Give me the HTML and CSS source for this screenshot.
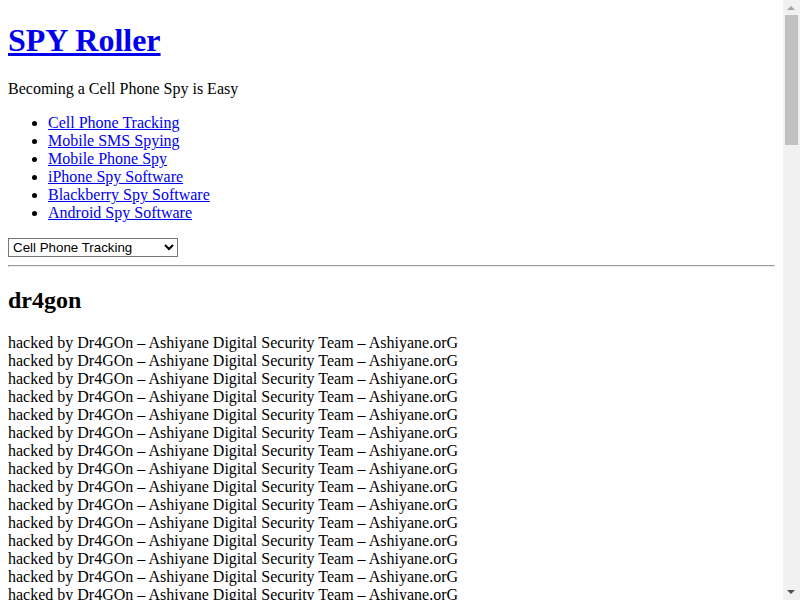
FILE: index.html
```html
<!DOCTYPE html>
<html>
<head>
<meta charset="utf-8">
<title>SPY Roller</title>
<link rel="stylesheet" href="styles.css">
</head>
<body>
<div class="header">
<h1 class="site-title"><a href="#">SPY Roller</a></h1>
<p class="tagline">Becoming a Cell Phone Spy is Easy</p>
<ul class="nav">
<li><a href="#">Cell Phone Tracking</a></li>
<li><a href="#">Mobile SMS Spying</a></li>
<li><a href="#">Mobile Phone Spy</a></li>
<li><a href="#">iPhone Spy Software</a></li>
<li><a href="#">Blackberry Spy Software</a></li>
<li><a href="#">Android Spy Software</a></li>
</ul>
<select class="nav-select">
<option>Cell Phone Tracking</option>
<option>Mobile SMS Spying</option>
<option>Mobile Phone Spy</option>
<option>iPhone Spy Software</option>
<option>Blackberry Spy Software</option>
<option>Android Spy Software</option>
</select>
</div>
<hr class="divider">
<div class="post">
<h2 class="post-title">dr4gon</h2>
<div class="post-body" id="body"></div>
</div>
<div class="fake-scrollbar">
<span class="sb-arrow sb-up"></span>
<span class="sb-thumb"></span>
<span class="sb-arrow sb-down"></span>
</div>
<script src="script.js"></script>
</body>
</html>
```
FILE: styles.css
```css
html { background: #fff; }
body {
  margin: 0 25px 8px 8px;
  font-family: "Liberation Serif", "Times New Roman", serif;
  font-size: 16px;
  color: #000;
}
a { color: #0000ee; }
.header { padding-top: 22px; }
.site-title { font-size: 32px; margin: 0 0 21.44px; }
.tagline { margin: 16px 0; }
.nav { margin: 16px 0; padding-left: 40px; }
.nav-select {
  font-family: Arial, "Liberation Sans", sans-serif;
  font-size: 13.33px;
  width: 170px;
  height: 19px;
  padding: 0;
  border: 1px solid #767676;
  border-radius: 0;
  background: #fff;
  color: #000;
}
.divider { margin: 8px 0 7px; }
.post-title { font-size: 24px; margin: 19.92px 0; }
.post-body { line-height: normal; }
.fake-scrollbar {
  position: fixed;
  top: 0;
  right: 0;
  width: 17px;
  height: 100%;
  background: #f1f1f1;
}
.sb-thumb {
  position: absolute;
  left: 2px;
  top: 15px;
  width: 13px;
  height: 130px;
  background: #c1c1c1;
}
.sb-arrow {
  position: absolute;
  left: 4px;
  width: 0;
  height: 0;
  border-left: 4.5px solid transparent;
  border-right: 4.5px solid transparent;
}
.sb-up { top: 6px; border-bottom: 4px solid #a3a3a3; }
.sb-down { bottom: 6px; border-top: 4px solid #505050; }
```
FILE: script.js
```js
var b = document.getElementById('body');
var html = [];
for (var i = 0; i < 125; i++) html.push('hacked by Dr4GOn \u2013 Ashiyane Digital Security Team \u2013 Ashiyane.orG');
b.innerHTML = html.join('<br>');
```
